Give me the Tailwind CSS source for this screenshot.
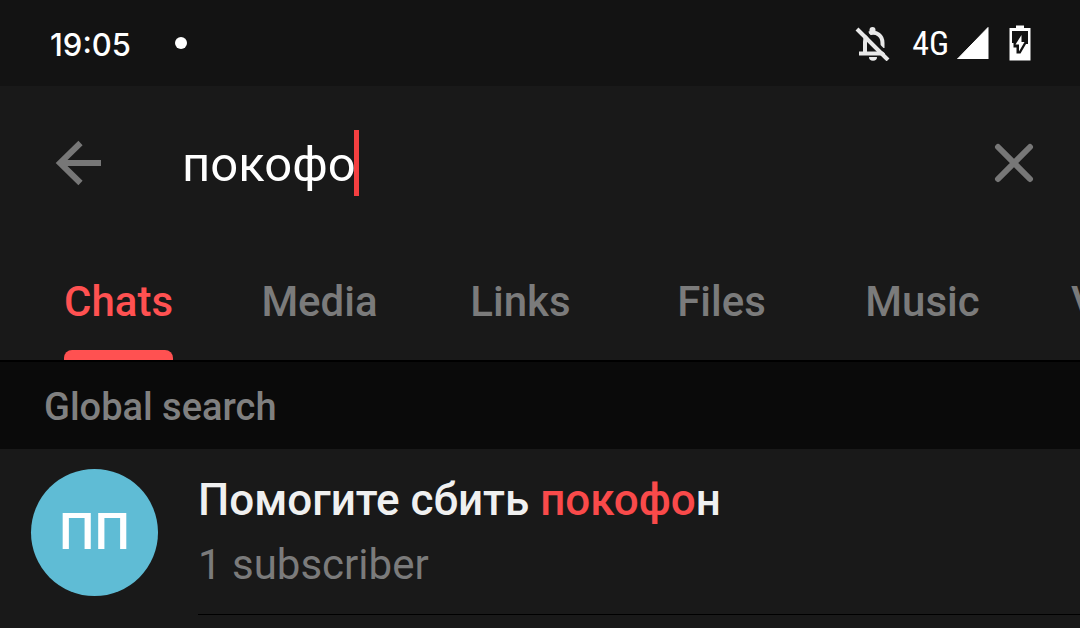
<!DOCTYPE html>
<html lang="en">
<head>
  <meta charset="UTF-8" />
  <meta name="viewport" content="width=device-width, initial-scale=1.0"/>
  <title>Search</title>
  <script src="https://cdn.jsdelivr.net/npm/@tailwindcss/browser@4"></script>
</head>
<body class="bg-[#191919] text-white font-['Roboto','Noto_Sans',sans-serif] min-h-screen overflow-hidden">
  <!-- Status bar -->
  <div class="bg-[#131313] h-[86px] pl-[50px] pr-[49px] flex items-center">
    <span class="w-[81px] pt-1 font-['Inter',sans-serif] font-medium text-[31px] leading-10">19:05</span>
    <span class="ml-11 size-3 rounded-full bg-white"></span>
    <svg class="ml-auto w-[36px] h-[36px]" viewBox="0 0 36 36" fill="none" stroke="#e8e8e8" stroke-width="4">
      <path d="M5 28.500H31M11 28V17C11 14.500 11.500 12.500 13 11M15 8.500C23 6 28.500 11 28.500 18V23"/>
      <path d="M15.500 8V5a3 3 0 0 1 6 0V8z" fill="#e8e8e8" stroke="none"/>
      <path d="M15 32h8a4 3.800 0 0 1-8 0z" fill="#e8e8e8" stroke="none"/>
      <path d="M6 1.500L37 32.500" stroke="#131313" stroke-width="3"/>
      <path d="M3 4L34 35" stroke-width="4"/>
    </svg>
    <span class="ml-[22px] font-['Roboto_Condensed','Liberation_Sans_Narrow','Roboto',sans-serif] text-[34px] leading-10">4G</span>
    <svg class="ml-2 w-[32px] h-[32px]" viewBox="0 0 32 32"><path d="M31 .500V32H.500z" fill="#fff" stroke="#fff" stroke-linejoin="round"/></svg>
    <svg class="ml-5 w-[22px] h-[36px]" viewBox="0 0 22 36">
      <path d="M7 .500h8V3h6.500v32.500H.500V3H7z" fill="#fff"/>
      <path d="M3 6h16v13h-2L11.500 28.500H7.500V22.500H4.500V18H3z" fill="#131313"/>
      <path d="M12.500 10L6.500 19.500h3.500v7L15.500 17H12.500z" fill="#fff"/>
    </svg>
  </div>

  <!-- Search field -->
  <header class="h-[154px] pl-[55px] pr-[46px] flex items-center">
    <button type="button" aria-label="Back">
      <svg class="w-[48px] h-[46px]" viewBox="0 0 48 46" fill="none" stroke="#777" stroke-width="6">
        <path d="M46 23H5M25.500 3L5 23L25.500 43"/>
      </svg>
    </button>
    <input type="text" aria-label="Search" value="покофо" class="ml-[79px] pt-1 field-sizing-content text-[49px] leading-[66px] outline-none">
    <span class="-ml-0.5 w-[5px] h-[66px] bg-[#f43f40]"></span>
    <button type="button" aria-label="Clear" class="ml-auto">
      <svg class="w-[40px] h-[40px]" viewBox="0 0 40 40" fill="none" stroke="#777" stroke-width="6" stroke-linecap="round">
        <path d="M4 4L36 36M36 4L4 36"/>
      </svg>
    </button>
  </header>

  <!-- Tabs -->
  <nav class="h-[122px] pl-[18px] flex overflow-hidden border-b-2 border-black text-[42px] leading-[124px] font-medium text-[#7b7b7b]">
    <a href="#" class="w-[201px] shrink-0 flex justify-center text-[#ff5151]">
      <span class="relative">Chats<span class="absolute inset-x-0 bottom-0 h-[10px] rounded-t-lg bg-[#ff5151]"></span></span>
    </a>
    <a href="#" class="w-[201px] shrink-0 text-center">Media</a>
    <a href="#" class="w-[201px] shrink-0 text-center">Links</a>
    <a href="#" class="w-[201px] shrink-0 text-center">Files</a>
    <a href="#" class="w-[201px] shrink-0 text-center">Music</a>
    <a href="#" class="w-[201px] shrink-0 text-center">Voice</a>
  </nav>

  <!-- Results -->
  <main>
    <h2 class="bg-[#0a0a0a] h-[87px] px-11 text-[38px] leading-[90px] font-medium text-[#808080]">Global search</h2>
    <a href="#" class="flex items-center pl-[31px]">
      <span class="size-[127px] shrink-0 rounded-full bg-[#5fbcd5] flex items-center justify-center text-[50px] leading-[60px] font-medium">ПП</span>
      <span class="ml-10 h-[166px] pt-5 flex-1 flex flex-col gap-1 border-b border-black">
        <span class="text-[44px] leading-[62px] font-medium text-[#f0f0f0]">Помогите сбить <span class="text-[#f94a4a]">покофо</span>н</span>
        <span class="text-[42px] leading-[60px] text-[#7b7b7b]">1 subscriber</span>
      </span>
    </a>
  </main>
</body>
</html>
